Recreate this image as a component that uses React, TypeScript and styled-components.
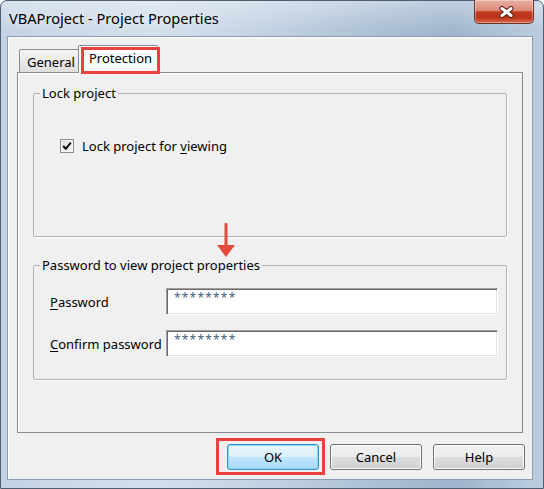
import React from "react";
import styled, { createGlobalStyle } from "styled-components";

const GlobalStyle = createGlobalStyle`
  html, body {
    margin: 0;
    padding: 0;
    background: #ffffff;
  }
  body {
    font-family: "Noto Sans", "Open Sans", sans-serif;
    color: #000;
  }
  * {
    box-sizing: border-box;
  }
`;

const Window = styled.div`
  width: 544px;
  height: 489px;
  display: flex;
  flex-direction: column;
  padding: 0 10px 8px 6px;
  border: 1px solid #4e5f73;
  border-radius: 7px 7px 0 0;
  background:
    linear-gradient(180deg, rgba(255, 255, 255, 0.35) 0px, rgba(255, 255, 255, 0) 30px),
    linear-gradient(90deg, #c4d3e4 0%, #d3dfec 28%, #c2d1e2 50%, #a9bdd3 72%, #9fb5cd 84%, #bccde0 100%);
`;

const TitleBar = styled.div`
  height: 35px;
  display: flex;
  justify-content: space-between;
  align-items: flex-start;
`;

const Title = styled.div`
  margin: 8px 0 0 2px;
  font-size: 14.6px;
  line-height: 18px;
  color: #000;
  text-shadow: 0 0 8px rgba(255, 255, 255, 0.9);
`;

const CloseButton = styled.div`
  width: 60px;
  height: 24px;
  margin: -1px -1px 0 0;
  display: flex;
  align-items: center;
  justify-content: center;
  border: 1px solid #6e3328;
  border-top: none;
  border-radius: 0 0 5px 5px;
  background: linear-gradient(
    180deg,
    #eab0a3 0%,
    #dc8b79 45%,
    #c43a1d 52%,
    #b9321a 75%,
    #d9684d 100%
  );
  box-shadow: inset 0 0 0 1px rgba(255, 255, 255, 0.35);
  padding-left: 4px;
`;

const Client = styled.div`
  flex: 1;
  display: flex;
  flex-direction: column;
  padding: 8px 9px 0 9px;
  border: 1px solid #8c9db1;
  background: #f0f0f0;
  box-shadow: inset 1px 1px 0 #ffffff;
`;

const TabStrip = styled.div`
  height: 28px;
  display: flex;
  align-items: flex-end;
  padding-left: 2px;
  margin-bottom: -1px;
  position: relative;
  z-index: 1;
`;

const Tab = styled.div<{ $active?: boolean; $highlight?: boolean }>`
  position: relative;
  height: ${(p) => (p.$active ? "28px" : "23px")};
  margin-bottom: ${(p) => (p.$active ? "0" : "1px")};
  margin-left: ${(p) => (p.$active ? "-1px" : "0")};
  padding: ${(p) => (p.$active ? "4px 0 0 10px" : "4px 0 0 7px")};
  width: ${(p) => (p.$active ? "80px" : "60px")};
  border: 1px solid #898c95;
  border-bottom: none;
  border-radius: 2px 2px 0 0;
  font-size: 13px;
  line-height: 17px;
  background: ${(p) =>
    p.$active
      ? "linear-gradient(180deg, #ffffff 0%, #f8f8f8 100%)"
      : "linear-gradient(180deg, #f3f3f3 0%, #ebebeb 50%, #dedede 100%)"};
  ${(p) =>
    p.$highlight &&
    `
    &::after {
      content: "";
      position: absolute;
      top: 1px;
      left: 2px;
      right: -3px;
      bottom: -1px;
      border: 3px solid #e8423f;
    }
  `}
`;

const Panel = styled.div`
  position: relative;
  height: 361px;
  padding: 11px 15px 0 15px;
  border: 1px solid #898c95;
  background: #f0f0f0;
  box-shadow: inset 1px 1px 0 #ffffff;
`;

const GroupBox = styled.fieldset<{ $gap?: number }>`
  margin: ${(p) => p.$gap ?? 0}px 0 0 0;
  padding: 0;
  min-width: 0;
  border: 1px solid #b2b2b2;
  border-radius: 2px;
  box-shadow: 1px 1px 0 #ffffff;
`;

const Legend = styled.legend`
  margin-left: 6px;
  padding: 0 2px;
  font-size: 13px;
  line-height: 18px;
`;

const LockBody = styled.div`
  padding: 35px 0 81px 26px;
  display: flex;
  align-items: center;
  gap: 8px;
`;

const CheckBox = styled.span`
  width: 14px;
  height: 14px;
  display: flex;
  align-items: center;
  justify-content: center;
  border: 1px solid #8e8f8f;
  background: linear-gradient(135deg, #dcdcdc 0%, #f6f6f6 100%);
  box-shadow: inset 0 0 0 1px #f4f4f4;
`;

const Label = styled.span`
  font-size: 13px;
  line-height: 18px;
  white-space: nowrap;
`;

const Mnemonic = styled.span`
  text-decoration: underline;
  text-underline-offset: 2px;
`;

const FieldGrid = styled.div`
  display: grid;
  grid-template-columns: 116px 1fr;
  row-gap: 15px;
  align-items: center;
  padding: 14px 8px 22px 16px;
`;

const TextBox = styled.div`
  height: 27px;
  padding: 2px 0 0 7px;
  background: #ffffff;
  border-top: 1px solid #a0a0a0;
  border-left: 1px solid #a0a0a0;
  border-right: 1px solid #ffffff;
  border-bottom: 1px solid #ffffff;
  box-shadow: inset 1px 1px 0 #696969, inset -1px -1px 0 #e3e3e3;
  font-size: 12px;
  line-height: 14px;
  letter-spacing: 1.2px;
  color: #4f6079;
`;

const ArrowMark = styled.svg`
  position: absolute;
  left: 199px;
  top: 150px;
`;

const ButtonRow = styled.div`
  display: flex;
  justify-content: flex-end;
  gap: 11px;
  margin: 11px -2px 0 0;
`;

const Button = styled.div<{ $default?: boolean; $highlight?: boolean }>`
  position: relative;
  width: 92px;
  height: 26px;
  display: flex;
  align-items: center;
  justify-content: center;
  font-size: 13px;
  border-radius: 3px;
  border: 1px solid ${(p) => (p.$default ? "#3c8fc8" : "#707070")};
  background: ${(p) =>
    p.$default
      ? "linear-gradient(180deg, #eaf6fd 0%, #d9f0fc 48%, #bee6fd 52%, #a7d9f5 100%)"
      : "linear-gradient(180deg, #f2f2f2 0%, #ebebeb 48%, #dddddd 52%, #cfcfcf 100%)"};
  box-shadow: inset 0 0 0 1px ${(p) => (p.$default ? "#7fdcf7" : "#fcfcfc")};
  ${(p) =>
    p.$highlight &&
    `
    &::after {
      content: "";
      position: absolute;
      top: -7px;
      left: -12px;
      right: -7px;
      bottom: -6px;
      border: 3px solid #e8423f;
    }
  `}
`;

function CloseGlyph() {
  return (
    <svg width="15" height="12" viewBox="0 0 15 12">
      <path d="M3 2.5 L12 9.5 M12 2.5 L3 9.5" stroke="#5a1f14" strokeWidth="5" strokeLinecap="round" />
      <path d="M3 2.5 L12 9.5 M12 2.5 L3 9.5" stroke="#ffffff" strokeWidth="3" strokeLinecap="round" />
    </svg>
  );
}

function CheckGlyph() {
  return (
    <svg width="10" height="10" viewBox="0 0 10 10">
      <path d="M1.2 5 L3.8 7.8 L8.8 1.6" fill="none" stroke="#111" strokeWidth="2" />
    </svg>
  );
}

export default function App() {
  return (
    <>
      <GlobalStyle />
      <Window>
        <TitleBar>
          <Title>VBAProject - Project Properties</Title>
          <CloseButton>
            <CloseGlyph />
          </CloseButton>
        </TitleBar>
        <Client>
          <TabStrip>
            <Tab>General</Tab>
            <Tab $active $highlight>
              Protection
            </Tab>
          </TabStrip>
          <Panel>
            <GroupBox>
              <Legend>Lock project</Legend>
              <LockBody>
                <CheckBox>
                  <CheckGlyph />
                </CheckBox>
                <Label>
                  Lock project for <Mnemonic>v</Mnemonic>iewing
                </Label>
              </LockBody>
            </GroupBox>
            <GroupBox $gap={19}>
              <Legend>Password to view project properties</Legend>
              <FieldGrid>
                <Label>
                  <Mnemonic>P</Mnemonic>assword
                </Label>
                <TextBox>********</TextBox>
                <Label>
                  <Mnemonic>C</Mnemonic>onfirm password
                </Label>
                <TextBox>********</TextBox>
              </FieldGrid>
            </GroupBox>
            <ArrowMark width="18" height="34" viewBox="0 0 18 34">
              <rect x="7.5" y="0" width="3" height="23" rx="1" fill="#e24a3b" />
              <polygon points="0,22 18,22 9,34" fill="#e24a3b" />
            </ArrowMark>
          </Panel>
          <ButtonRow>
            <Button $default $highlight>
              OK
            </Button>
            <Button>Cancel</Button>
            <Button>Help</Button>
          </ButtonRow>
        </Client>
      </Window>
    </>
  );
}
